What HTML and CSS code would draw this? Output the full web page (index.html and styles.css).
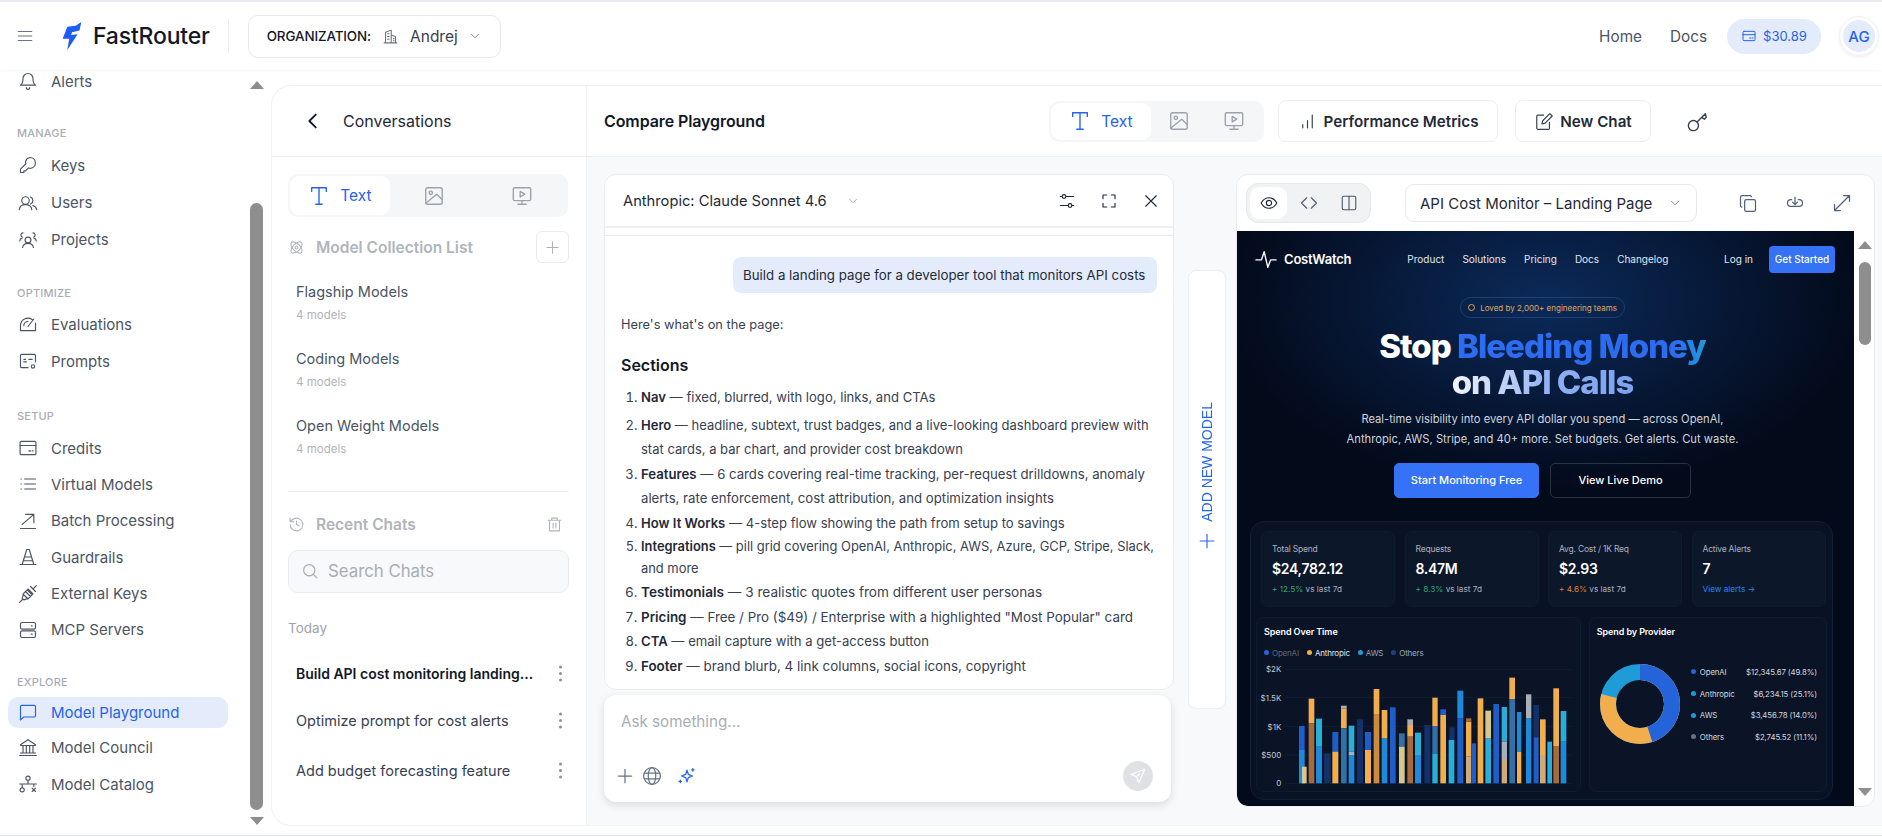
FILE: index.html
```html
<!DOCTYPE html>
<html lang="en">
<head>
    <meta charset="UTF-8">
    <title>FastRouter - Model Playground</title>
    <link rel="stylesheet" href="styles.css">
</head>
<body>
    <header class="topbar">
        <svg class="ic menu-ic" viewBox="0 0 24 24"><path d="M3 6h18M3 12h18M3 18h18"/></svg>
        <svg class="logo" viewBox="0 0 22 30"><path d="M6 5 L15 4 L21 0 L19 9 L11 11 L10 14 L17 13 L6 30 L8 18 L1 18 Z"/></svg>
        <span class="brand">FastRouter</span>
        <span class="top-divider"></span>
        <div class="org">
            <span class="org-label">ORGANIZATION:</span>
            <svg class="ic" viewBox="0 0 24 24"><path d="M3 21h18M5 21V6l8-3v18M13 10l6 2v9M8 8h2M8 12h2M8 16h2M16 15h1M16 18h1"/></svg>
            <span class="org-name">Andrej</span>
            <svg class="ic chev" viewBox="0 0 24 24"><path d="M6 9l6 6 6-6"/></svg>
        </div>
        <nav class="top-links">
            <a>Home</a>
            <a>Docs</a>
            <span class="credit">
                <svg class="ic" viewBox="0 0 24 24"><rect x="3" y="5" width="18" height="14" rx="1.5"/><path d="M3 10h18M13 15h2M17 15h1"/></svg>
                $30.89
            </span>
            <span class="avatar"><span>AG</span></span>
        </nav>
    </header>

    <div class="app">
        <aside class="sidebar">
            <ul class="side-list first">
                <li><svg class="ic" viewBox="0 0 24 24"><path d="M6 9a6 6 0 0 1 12 0c0 6 3 8 3 8H3s3-2 3-8M10 20a2 2 0 0 0 4 0"/></svg>Alerts</li>
            </ul>
            <div class="side-label">MANAGE</div>
            <ul class="side-list wide">
                <li><svg class="ic" viewBox="0 0 24 24"><path d="M14.5 3a6.5 6.5 0 0 1 1 12.9c-1 .2-2 0-3-.4L9 19H7v2H3v-4l6.500-6.500c-.4-1-.6-2-.4-3A6.500 6.500 0 0 1 14.500 3z"/></svg>Keys</li>
                <li><svg class="ic" viewBox="0 0 24 24"><circle cx="9" cy="9" r="4.500"/><path d="M1.500 20c.5-4 3.500-6 7.500-6s7 2 7.500 6M15 4.800a4.500 4.500 0 0 1 0 8.400M18 15c2.500.8 4 2.500 4.500 5"/></svg>Users</li>
                <li><svg class="ic" viewBox="0 0 24 24"><circle cx="12" cy="12" r="3.500"/><path d="M5.500 21c.4-3 3-5 6.500-5s6.100 2 6.500 5M6 3.500a2.500 2.500 0 0 0-1 4.800M2 13c.3-2 1.500-3 3-3.300M18 3.500a2.500 2.500 0 0 1 1 4.800M22 13c-.3-2-1.500-3-3-3.300"/></svg>Projects</li>
            </ul>
            <div class="side-label optimize">OPTIMIZE</div>
            <ul class="side-list wide">
                <li><svg class="ic" viewBox="0 0 24 24"><path d="M3 20v-6a9 9 0 0 1 14-7.500M21 11v9H3M12 15l7-9M7 14a5 5 0 0 1 5-5"/></svg>Evaluations</li>
                <li><svg class="ic" viewBox="0 0 24 24"><path d="M12 20H4.500A1.500 1.500 0 0 1 3 18.500v-13A1.500 1.500 0 0 1 4.500 4h15A1.500 1.500 0 0 1 21 5.500V13M7 13h3M13 10h4M7 10h2"/><circle cx="18" cy="18.500" r="2"/></svg>Prompts</li>
            </ul>
            <div class="side-label setup">SETUP</div>
            <ul class="side-list">
                <li><svg class="ic" viewBox="0 0 24 24"><rect x="2.500" y="4" width="19" height="16" rx="1.500"/><path d="M2.500 9h19M13 15.500h2M17 15.500h1"/></svg>Credits</li>
                <li><svg class="ic" viewBox="0 0 24 24"><path d="M8 6h13M8 12h13M8 18h13M3.500 6h.5M3.500 12h.5M3.500 18h.5"/></svg>Virtual Models</li>
                <li><svg class="ic" viewBox="0 0 24 24"><path d="M5 16L19 4M9 4h10v10M3 21h18"/></svg>Batch Processing</li>
                <li><svg class="ic" viewBox="0 0 24 24"><path d="M2.500 21h19M5 21L10.500 3h3L19 21M8 12h8M6.500 16.500h11"/></svg>Guardrails</li>
                <li><svg class="ic" viewBox="0 0 24 24"><path d="M2 22l4-4M18 6l4-4M6 12l6 6M9 9l6 6M12 6l6 6M5 17l2-6 4-4 6 6-4 4-6 2zM15 3l6 6"/></svg>External Keys</li>
                <li><svg class="ic" viewBox="0 0 24 24"><rect x="3" y="3" width="18" height="8" rx="2"/><rect x="3" y="13" width="18" height="8" rx="2"/><path d="M16 7h1M16 17h1"/></svg>MCP Servers</li>
            </ul>
            <div class="side-label explore">EXPLORE</div>
            <ul class="side-list">
                <li class="active"><svg class="ic" viewBox="0 0 24 24"><path d="M3 5.500A1.500 1.500 0 0 1 4.500 4h15A1.500 1.500 0 0 1 21 5.500v11a1.500 1.500 0 0 1-1.500 1.500H7l-4 3.500z"/></svg>Model Playground</li>
                <li><svg class="ic" viewBox="0 0 24 24"><path d="M12 2L3 8v1h18V8zM2 21h20M3 18h18M6 9v9M10 9v9M14 9v9M18 9v9"/></svg>Model Council</li>
                <li><svg class="ic" viewBox="0 0 24 24"><circle cx="12" cy="5" r="2.500"/><circle cx="5" cy="19" r="2.500"/><path d="M12 7.500V12M2 12h20M5 12v4.500M19 12v3M17 17l4 4M21 17l-4 4"/></svg>Model Catalog</li>
            </ul>
        </aside>
        <div class="side-scroll">
            <span class="arrow-up"></span>
            <span class="thumb"></span>
            <span class="arrow-down"></span>
        </div>

        <main class="panel">
            <section class="conversations">
                <div class="conv-head">
                    <svg class="ic back" viewBox="0 0 24 24"><path d="M15 5l-7 7 7 7"/></svg>
                    <span>Conversations</span>
                </div>
                <div class="conv-body">
                    <div class="tabs tabs-wide">
                        <span class="tab active"><svg class="ic" viewBox="0 0 24 24"><path d="M4 7V3h16v4M12 3v18M8.500 21h7"/></svg>Text</span>
                        <span class="tab"><svg class="ic" viewBox="0 0 24 24"><rect x="3" y="3" width="18" height="18" rx="2"/><circle cx="8.500" cy="8.500" r="1.800"/><path d="M3 20l12-10 6 6"/></svg></span>
                        <span class="tab"><svg class="ic" viewBox="0 0 24 24"><rect x="2.500" y="3" width="19" height="14" rx="1.500"/><path d="M10 7l5 3-5 3zM12 17v4M7.500 21h9"/></svg></span>
                    </div>
                    <div class="list-head">
                        <svg class="ic" viewBox="0 0 24 24"><circle cx="12" cy="12" r="2"/><ellipse cx="12" cy="12" rx="10" ry="5" transform="rotate(45 12 12)"/><ellipse cx="12" cy="12" rx="10" ry="5" transform="rotate(-45 12 12)"/></svg>
                        <span>Model Collection List</span>
                        <span class="add-box"><svg class="ic" viewBox="0 0 24 24"><path d="M12 4v16M4 12h16"/></svg></span>
                    </div>
                    <div class="collection"><strong>Flagship Models</strong><small>4 models</small></div>
                    <div class="collection"><strong>Coding Models</strong><small>4 models</small></div>
                    <div class="collection"><strong>Open Weight Models</strong><small>4 models</small></div>
                    <hr class="rule">
                    <div class="list-head recent">
                        <svg class="ic" viewBox="0 0 24 24"><path d="M3 12a9 9 0 1 0 3-6.700L3 8M3 3v5h5M12 7v5l4 2"/></svg>
                        <span>Recent Chats</span>
                        <svg class="ic trash" viewBox="0 0 24 24"><path d="M3 6h18M8 6V3h8v3M5 6v15h14V6M10 10v7M14 10v7"/></svg>
                    </div>
                    <div class="search">
                        <svg class="ic" viewBox="0 0 24 24"><circle cx="11" cy="11" r="7.500"/><path d="M21 21l-4.500-4.500"/></svg>
                        Search Chats
                    </div>
                    <div class="today">Today</div>
                    <div class="chat-row bold"><span>Build API cost monitoring landing...</span><i class="dots"></i></div>
                    <div class="chat-row"><span>Optimize prompt for cost alerts</span><i class="dots"></i></div>
                    <div class="chat-row"><span>Add budget forecasting feature</span><i class="dots"></i></div>
                </div>
            </section>

            <section class="playground">
                <div class="play-head">
                    <h1>Compare Playground</h1>
                    <div class="tabs">
                        <span class="tab active"><svg class="ic" viewBox="0 0 24 24"><path d="M4 7V3h16v4M12 3v18M8.500 21h7"/></svg>Text</span>
                        <span class="tab"><svg class="ic" viewBox="0 0 24 24"><rect x="3" y="3" width="18" height="18" rx="2"/><circle cx="8.500" cy="8.500" r="1.800"/><path d="M3 20l12-10 6 6"/></svg></span>
                        <span class="tab"><svg class="ic" viewBox="0 0 24 24"><rect x="2.500" y="3" width="19" height="14" rx="1.500"/><path d="M10 7l5 3-5 3zM12 17v4M7.500 21h9"/></svg></span>
                    </div>
                    <button class="head-btn perf"><svg class="ic" viewBox="0 0 24 24"><path d="M6 20v-4M12 20V11M18 20V4"/></svg>Performance Metrics</button>
                    <button class="head-btn chat"><svg class="ic" viewBox="0 0 24 24"><path d="M12 4H5a1.500 1.500 0 0 0-1.500 1.500v15A1.500 1.500 0 0 0 5 22h13a1.500 1.500 0 0 0 1.500-1.500V13M10 15l1-4 9-9 3 3-9 9z"/></svg>New Chat</button>
                    <svg class="ic key-ic" viewBox="0 0 24 24"><circle cx="7" cy="17" r="5.500"/><path d="M11 13L20 4M16 8l3 2 2-2-1-4"/></svg>
                </div>

                <div class="compare">
                    <div class="chat-col">
                        <div class="model-card">
                            <div class="model-head">
                                <span class="model-name">Anthropic: Claude Sonnet 4.6</span>
                                <svg class="ic chev" viewBox="0 0 24 24"><path d="M6 9l6 6 6-6"/></svg>
                                <span class="model-actions">
                                    <svg class="ic" viewBox="0 0 24 24"><circle cx="8" cy="6" r="2.500"/><circle cx="16" cy="18" r="2.500"/><path d="M11 6h10M3 18h10M3 6h2M19 18h2"/></svg>
                                    <svg class="ic" viewBox="0 0 24 24"><path d="M4 9V4h5M15 4h5v5M20 15v5h-5M9 20H4v-5"/></svg>
                                    <svg class="ic" viewBox="0 0 24 24"><path d="M5 5l14 14M19 5L5 19"/></svg>
                                </span>
                            </div>
                            <div class="model-strip"></div>
                            <div class="messages">
                                <div class="bubble">Build a landing page for a developer tool that monitors API costs</div>
                                <p class="intro">Here's what's on the page:</p>
                                <h2>Sections</h2>
                                <ol>
                                    <li><b>Nav</b> — fixed, blurred, with logo, links, and CTAs</li>
                                    <li class="fs-13"><b>Hero</b> — headline, subtext, trust badges, and a live-looking dashboard preview with<br>stat cards, a bar chart, and provider cost breakdown</li>
                                    <li class="fs-13-2"><b>Features</b> — 6 cards covering real-time tracking, per-request drilldowns, anomaly<br>alerts, rate enforcement, cost attribution, and optimization insights</li>
                                    <li><b>How It Works</b> — 4-step flow showing the path from setup to savings</li>
                                    <li class="integrations"><b>Integrations</b> — pill grid covering OpenAI, Anthropic, AWS, Azure, GCP, Stripe, Slack,<br>and more</li>
                                    <li class="fs-13-6"><b>Testimonials</b> — 3 realistic quotes from different user personas</li>
                                    <li class="fs-13-4"><b>Pricing</b> — Free / Pro ($49) / Enterprise with a highlighted "Most Popular" card</li>
                                    <li><b>CTA</b> — email capture with a get-access button</li>
                                    <li class="fs-13-4"><b>Footer</b> — brand blurb, 4 link columns, social icons, copyright</li>
                                </ol>
                            </div>
                        </div>
                        <div class="ask">
                            <div class="ask-text">Ask something...</div>
                            <div class="ask-tools">
                                <svg class="ic" viewBox="0 0 24 24"><path d="M12 4v16M4 12h16"/></svg>
                                <svg class="ic" viewBox="0 0 24 24"><circle cx="12" cy="12" r="10"/><ellipse cx="12" cy="12" rx="4.500" ry="10"/><path d="M3 8.500h18M3 15.500h18"/></svg>
                                <svg class="ic spark" viewBox="0 0 24 24"><path d="M12 5l1.500 5 5 2-5 2-1.500 5-1.500-5-5-2 5-2zM19 3v3M17.500 4.500h3M4 17v3M2.500 18.500h3"/></svg>
                                <span class="send"><svg class="ic" viewBox="0 0 24 24"><path d="M21 3L3 10l7 3 3 8zM10 13l4-4"/></svg></span>
                            </div>
                        </div>
                    </div>

                    <div class="add-model">
                        <span>ADD NEW MODEL</span>
                        <svg class="ic" viewBox="0 0 24 24"><path d="M12 3v18M3 12h18"/></svg>
                    </div>

                    <div class="preview-card">
                        <div class="preview-bar">
                            <div class="views">
                                <span class="view active"><svg class="ic" viewBox="0 0 24 24"><path d="M1.500 12S5.500 5 12 5s10.500 7 10.500 7-4 7-10.500 7S1.500 12 1.500 12z"/><circle cx="12" cy="12" r="3.500"/></svg></span>
                                <span class="view"><svg class="ic" viewBox="0 0 24 24"><path d="M9 5l-7 7 7 7M15 5l7 7-7 7"/></svg></span>
                                <span class="view"><svg class="ic" viewBox="0 0 24 24"><rect x="3" y="3" width="18" height="18" rx="2"/><path d="M12 3v18"/></svg></span>
                            </div>
                            <div class="page-select">
                                <span>API Cost Monitor – Landing Page</span>
                                <svg class="ic chev" viewBox="0 0 24 24"><path d="M6 9l6 6 6-6"/></svg>
                            </div>
                            <div class="bar-actions">
                                <svg class="ic" viewBox="0 0 24 24"><rect x="8" y="8" width="13" height="14" rx="2"/><path d="M16 4.500A2 2 0 0 0 14 3H5a2 2 0 0 0-2 2v10a2 2 0 0 0 1.500 2"/></svg>
                                <svg class="ic" viewBox="0 0 24 24"><path d="M8 8H7a4 4 0 0 0 0 8h10a4 4 0 0 0 0-8h-1M12 5v9M9 11l3 3 3-3"/></svg>
                                <svg class="ic" viewBox="0 0 24 24"><path d="M14 3h7v7M21 3L3 21M3 14v7h7"/></svg>
                            </div>
                        </div>
                        <div class="preview-wrap">
                            <div class="site">
                                <div class="site-nav">
                                    <svg class="ic pulse" viewBox="0 0 24 24"><path d="M1 13h6l3-9 4 17 3-8h6"/></svg>
                                    <span class="site-brand">CostWatch</span>
                                    <span class="site-links"><a>Product</a><a>Solutions</a><a>Pricing</a><a>Docs</a><a>Changelog</a></span>
                                    <span class="site-login">Log in</span>
                                    <span class="site-cta">Get Started</span>
                                </div>
                                <div class="hero">
                                    <span class="hero-badge"><i></i>Loved by 2,000+ engineering teams</span>
                                    <div class="hero-title">Stop <em>Bleeding Money</em><br><span>on API Calls</span></div>
                                    <p>Real-time visibility into every API dollar you spend — across OpenAI,<br>Anthropic, AWS, Stripe, and 40+ more. Set budgets. Get alerts. Cut waste.</p>
                                    <div class="hero-btns">
                                        <span class="btn-main">Start Monitoring Free</span>
                                        <span class="btn-ghost">View Live Demo</span>
                                    </div>
                                </div>
                                <div class="dash">
                                    <div class="stats">
                                        <div class="stat"><label>Total Spend</label><strong>$24,782.12</strong><small><em class="up">+ 12.5%</em> vs last 7d</small></div>
                                        <div class="stat"><label>Requests</label><strong>8.47M</strong><small><em class="up">+ 8.3%</em> vs last 7d</small></div>
                                        <div class="stat"><label>Avg. Cost / 1K Req</label><strong>$2.93</strong><small><em class="warn">+ 4.6%</em> vs last 7d</small></div>
                                        <div class="stat"><label>Active Alerts</label><strong>7</strong><small class="link">View alerts →</small></div>
                                    </div>
                                    <div class="charts">
                                        <div class="chart-card spend">
                                            <h3>Spend Over Time</h3>
                                            <div class="legend">
                                                <span class="muted"><i class="c-blue"></i>OpenAI</span>
                                                <span class="bright"><i class="c-orange"></i>Anthropic</span>
                                                <span><i class="c-aws"></i>AWS</span>
                                                <span><i class="c-other"></i>Others</span>
                                            </div>
                                            <svg class="bars" viewBox="15 66 960 384">
                                                <g class="grid"><path d="M100 88H960M100 173H960M100 260H960M100 345H960M100 430H960"/></g>
                                                <g class="axis"><text x="88" y="97">$2K</text><text x="88" y="182">$1.5K</text><text x="88" y="269">$1K</text><text x="88" y="354">$500</text><text x="88" y="439">0</text></g>
                                                <g fill="#12306a"><rect x="216" y="340" width="20" height="90"/><rect x="315" y="238" width="18" height="192"/><rect x="517" y="255" width="18" height="175"/><rect x="844" y="195" width="17" height="97"/><rect x="592" y="262" width="16" height="38"/></g>
                                                <g fill="#1f5dc8"><rect x="141" y="258" width="17" height="72"/><rect x="241" y="276" width="18" height="59"/><rect x="339" y="276" width="18" height="54"/><rect x="565" y="208" width="17" height="17"/><rect x="724" y="192" width="17" height="238"/><rect x="845" y="292" width="15" height="138"/><rect x="616" y="235" width="18" height="195"/><rect x="414" y="202" width="17" height="228"/><rect x="660" y="310" width="12" height="120"/></g>
                                                <g fill="#1f88d8"><rect x="141" y="330" width="17" height="100"/><rect x="192" y="320" width="18" height="110"/><rect x="290" y="345" width="17" height="85"/><rect x="389" y="295" width="17" height="135"/><rect x="489" y="345" width="18" height="85"/><rect x="616" y="152" width="18" height="83"/><rect x="926" y="305" width="17" height="125"/><rect x="795" y="216" width="13" height="119"/><rect x="822" y="235" width="16" height="195"/></g>
                                                <g fill="#28aed8"><rect x="192" y="236" width="18" height="84"/><rect x="290" y="257" width="17" height="78"/><rect x="489" y="278" width="18" height="67"/><rect x="541" y="340" width="16" height="90"/><rect x="590" y="300" width="17" height="130"/><rect x="700" y="295" width="17" height="135"/><rect x="749" y="201" width="16" height="104"/><rect x="886" y="305" width="14" height="125"/><rect x="926" y="213" width="17" height="92"/></g>
                                                <g fill="#f2ae4c"><rect x="170" y="176" width="17" height="74"/><rect x="241" y="335" width="18" height="95"/><rect x="267" y="205" width="17" height="60"/><rect x="339" y="330" width="18" height="100"/><rect x="365" y="147" width="17" height="75"/><rect x="389" y="210" width="17" height="85"/><rect x="466" y="255" width="17" height="35"/><rect x="541" y="173" width="16" height="85"/><rect x="565" y="225" width="17" height="205"/><rect x="642" y="245" width="16" height="105"/><rect x="677" y="175" width="17" height="255"/><rect x="772" y="113" width="17" height="65"/><rect x="795" y="335" width="13" height="95"/><rect x="864" y="238" width="17" height="107"/><rect x="904" y="145" width="17" height="173"/></g>
                                                <g fill="#a86a3a"><rect x="170" y="250" width="17" height="180"/><rect x="466" y="290" width="17" height="140"/><rect x="642" y="235" width="16" height="10"/><rect x="904" y="318" width="17" height="112"/></g>
                                                <g fill="#cc8a3e"><rect x="365" y="222" width="17" height="208"/></g>
                                                <g fill="#3270a8"><rect x="267" y="265" width="17" height="165"/><rect x="441" y="280" width="17" height="40"/><rect x="541" y="258" width="16" height="82"/><rect x="772" y="178" width="17" height="252"/></g>
                                                <g fill="#d6c88c"><rect x="150" y="380" width="14" height="50"/><rect x="441" y="320" width="17" height="110"/><rect x="700" y="212" width="17" height="83"/></g>
                                                <g fill="#d2aa78"><rect x="642" y="350" width="16" height="80"/><rect x="749" y="360" width="16" height="70"/><rect x="864" y="345" width="17" height="85"/></g>
                                                <g fill="#a9afb8"><rect x="267" y="197" width="17" height="8"/><rect x="466" y="238" width="17" height="17"/><rect x="749" y="305" width="16" height="55"/><rect x="822" y="163" width="16" height="72"/><rect x="290" y="335" width="17" height="10"/></g>
                                            </svg>
                                        </div>
                                        <div class="chart-card provider">
                                            <h3>Spend by Provider</h3>
                                            <div class="provider-body">
                                                <svg class="donut" viewBox="0 0 84 84">
                                                    <circle class="seg" pathLength="100" cx="42" cy="42" r="32" stroke="#1f9bd8" stroke-dasharray="100 100"/>
                                                    <circle class="seg" pathLength="100" cx="42" cy="42" r="32" stroke="#f2ae4c" stroke-dasharray="79 100"/>
                                                    <circle class="seg" pathLength="100" cx="42" cy="42" r="32" stroke="#2563d8" stroke-dasharray="45 100"/>
                                                </svg>
                                                <ul class="provider-list">
                                                    <li><i class="c-blue"></i>OpenAI<span>$12,345.67 (49.8%)</span></li>
                                                    <li><i class="c-aws"></i>Anthropic<span>$6,234.15 (25.1%)</span></li>
                                                    <li><i class="c-aws"></i>AWS<span>$3,456.78 (14.0%)</span></li>
                                                    <li><i class="c-grey"></i>Others<span>$2,745.52 (11.1%)</span></li>
                                                </ul>
                                            </div>
                                        </div>
                                    </div>
                                </div>
                            </div>
                            <div class="preview-scroll">
                                <span class="arrow-up"></span>
                                <span class="thumb"></span>
                                <span class="arrow-down"></span>
                            </div>
                        </div>
                    </div>
                </div>
            </section>
        </main>
    </div>
</body>
</html>
```

FILE: styles.css
```css
* {
    box-sizing: border-box;
}
html, body {
    margin: 0;
    height: 100%;
    overflow: hidden;
}
body {
    font-family: Inter, "Liberation Sans", sans-serif;
    background-color: #fff;
    color: #1f2937;
    border-top: 2px solid #e9e9f2;
    display: flex;
    flex-direction: column;
}
ul, ol {
    list-style: none;
    margin: 0;
    padding: 0;
}
.ic {
    width: 20px;
    height: 20px;
    fill: none;
    stroke: currentColor;
    stroke-width: 1.5;
    stroke-linecap: round;
    stroke-linejoin: round;
    flex: none;
}

/* top bar */
.topbar {
    height: 68px;
    flex: none;
    display: flex;
    align-items: center;
    padding: 0 3px 0 16px;
    position: relative;
    z-index: 2;
    background-color: #fff;
    box-shadow: 0 1px 3px rgba(0, 0, 0, 0.04);
}
.menu-ic {
    width: 18px;
    height: 18px;
    color: #6b7280;
}
.logo {
    width: 24px;
    height: 28px;
    fill: #1d5cf5;
    margin-left: 26px;
}
.brand {
    font-size: 23px;
    font-weight: 500;
    color: #111827;
    margin-left: 9px;
    letter-spacing: -0.2px;
}
.top-divider {
    width: 1px;
    height: 34px;
    background-color: #eceef1;
    margin-left: 18px;
}
.org {
    width: 253px;
    height: 43px;
    margin-left: 19px;
    border: 1px solid #e6e8ec;
    border-radius: 10px;
    display: flex;
    align-items: center;
    padding-left: 18px;
}
.org-label {
    font-size: 13.4px;
    font-weight: 500;
    color: #111827;
    letter-spacing: -0.1px;
}
.org .ic {
    width: 17px;
    height: 17px;
    color: #6b7280;
    margin-left: 11px;
}
.org-name {
    font-size: 15.5px;
    margin-left: 11px;
    color: #374151;
}
.org .chev {
    width: 14px;
    height: 14px;
    margin-left: 10px;
}
.top-links {
    margin-left: auto;
    display: flex;
    align-items: center;
    font-size: 15.3px;
    color: #4b5563;
}
.top-links a {
    margin-right: 28px;
}
.credit {
    width: 94px;
    height: 35px;
    margin-left: -8px;
    border-radius: 18px;
    background-color: #e4ecfc;
    color: #2563eb;
    font-size: 13px;
    display: flex;
    align-items: center;
    justify-content: center;
    gap: 6px;
}
.credit .ic {
    width: 16px;
    height: 16px;
}
.avatar {
    width: 40px;
    height: 40px;
    margin: 0 0 0 18px;
    border: 1px solid #eef0f3;
    border-radius: 50%;
    display: flex;
    align-items: center;
    justify-content: center;
    box-shadow: 0 1px 3px rgba(0, 0, 0, 0.08);
}
.avatar span {
    width: 32px;
    height: 32px;
    border-radius: 50%;
    background-color: #e4ecfc;
    color: #2563eb;
    font-size: 15px;
    font-weight: 500;
    display: flex;
    align-items: center;
    justify-content: center;
}

/* sidebar */
.app {
    flex: 1;
    display: flex;
    min-height: 0;
    border-bottom: 1px solid #e8e9ec;
}
.sidebar {
    width: 245px;
    flex: none;
    overflow: hidden;
    padding: 0 17px 0 8px;
}
.side-list.first {
    margin-top: -7px;
}
.side-list li {
    height: 36.4px;
    display: flex;
    align-items: center;
    gap: 13px;
    padding-left: 10px;
    font-size: 15px;
    color: #4b5563;
    border-radius: 10px;
}
.side-list.wide li {
    height: 37.2px;
}
.side-list li .ic {
    width: 20px;
    height: 20px;
    stroke-width: 1.4;
}
.side-list li.active {
    height: 31px;
    margin: 2px 0;
    background-color: #e4ecfc;
    color: #2563eb;
}
.side-label {
    height: 16px;
    margin: 26px 0 5.5px 9px;
    font-size: 11px;
    font-weight: 500;
    line-height: 16px;
    color: #a8adb5;
    letter-spacing: 0.2px;
}
.side-label.optimize {
    margin-top: 27px;
    margin-bottom: 4px;
}
.side-label.setup {
    margin-top: 28px;
    margin-bottom: 6px;
}
.side-label.explore {
    margin-top: 25.5px;
    margin-bottom: 7px;
}
.side-scroll, .preview-scroll {
    flex: none;
    display: flex;
    flex-direction: column;
    align-items: center;
    position: relative;
}
.side-scroll {
    width: 23px;
    background-color: #fff;
}
.thumb {
    background-color: #8e8e8e;
    border-radius: 7px;
    width: 13px;
}
.side-scroll .thumb {
    position: absolute;
    top: 133px;
    height: 607px;
}
.arrow-up, .arrow-down {
    width: 0;
    height: 0;
    border-left: 7px solid transparent;
    border-right: 7px solid transparent;
}
.arrow-up {
    border-bottom: 8px solid #8e8e8e;
}
.arrow-down {
    border-top: 8px solid #8e8e8e;
}
.side-scroll .arrow-up {
    margin-top: 11px;
}
.side-scroll .arrow-down {
    position: absolute;
    bottom: 10px;
}

/* main panel */
.panel {
    flex: 1;
    display: flex;
    min-width: 0;
    margin: 15px 0 9px 3px;
    border: 1px solid #f0f1f3;
    border-right: none;
    border-radius: 20px 0 0 20px;
    overflow: hidden;
    background-color: #fff;
}
.conversations {
    width: 315px;
    flex: none;
    border-right: 1px solid #f0f1f3;
}
.conv-head {
    height: 71px;
    display: flex;
    align-items: center;
    padding-left: 30px;
    font-size: 16px;
    color: #1f2937;
    border-bottom: 1px solid #eff0f2;
}
.conv-head .back {
    width: 22px;
    height: 22px;
    margin-right: 19px;
    stroke-width: 2;
    color: #111827;
}
.conv-body {
    padding: 17px 17px 0 16px;
}
.tabs {
    width: 215px;
    height: 41px;
    display: flex;
    align-items: center;
    padding: 2px;
    border-radius: 10px;
    background-color: #f5f6f7;
    font-size: 15.5px;
}
.tabs-wide {
    width: 280px;
    height: 43px;
}
.tab {
    flex: 1;
    height: 100%;
    display: flex;
    align-items: center;
    justify-content: center;
    color: #9ca3af;
}
.tab .ic {
    width: 22px;
    height: 22px;
}
.tab.active {
    flex: none;
    width: 100px;
    gap: 10px;
    background-color: #fff;
    border-radius: 9px;
    color: #2563eb;
}
.list-head {
    height: 32px;
    margin-top: 14px;
    display: flex;
    align-items: center;
    gap: 11px;
    font-size: 15.5px;
    font-weight: 600;
    color: #b0b4bb;
}
.list-head .ic {
    width: 17px;
    height: 17px;
}
.add-box {
    margin-left: auto;
    width: 33px;
    height: 32px;
    border: 1px solid #e9ebee;
    border-radius: 6px;
    display: flex;
    align-items: center;
    justify-content: center;
}
.collection {
    height: 67.2px;
    padding: 19px 0 0 8px;
}
.collection strong {
    display: block;
    font-size: 14.5px;
    font-weight: 400;
    color: #4b5563;
    line-height: 20px;
}
.collection small {
    display: block;
    font-size: 11.5px;
    line-height: 16px;
    margin-top: 5px;
    color: #b0b4bb;
}
.rule {
    border: none;
    border-top: 1px solid #eceef1;
    margin: 26.4px 0 0;
}
.recent {
    margin-top: 17px;
}
.trash {
    margin: 0 6px 0 auto;
}
.search {
    height: 43px;
    margin-top: 9px;
    display: flex;
    align-items: center;
    gap: 9px;
    padding-left: 12px;
    border: 1px solid #e9ebee;
    border-radius: 10px;
    background-color: #f8f9fa;
    font-size: 16.8px;
    color: #a8adb5;
}
.search .ic {
    width: 18px;
    height: 18px;
}
.today {
    margin-top: 25px;
    font-size: 13.5px;
    line-height: 20px;
    color: #9ca3af;
}
.chat-row {
    height: 47px;
    display: flex;
    align-items: center;
    justify-content: space-between;
    padding: 0 6px 0 8px;
    font-size: 14.5px;
    color: #374151;
}
.chat-row.bold {
    margin-top: 12px;
    font-size: 14px;
    font-weight: 600;
    color: #111827;
}
.chat-row:last-child {
    margin-top: 3px;
}
.dots {
    width: 3px;
    height: 3px;
    border-radius: 50%;
    background-color: #8b9099;
    box-shadow: 0 -6.5px 0 #8b9099, 0 6.5px 0 #8b9099;
    margin-right: 1px;
}

/* playground */
.playground {
    flex: 1;
    min-width: 0;
    display: flex;
    flex-direction: column;
}
.play-head {
    height: 71px;
    flex: none;
    display: flex;
    align-items: center;
    padding-left: 17px;
    border-bottom: 1px solid #eceef1;
}
.play-head h1 {
    width: 445px;
    margin: 0;
    font-size: 16px;
    font-weight: 600;
    color: #111827;
    letter-spacing: -0.1px;
}
.head-btn {
    height: 42px;
    display: flex;
    align-items: center;
    justify-content: center;
    gap: 7px;
    border: 1px solid #eceef1;
    border-radius: 8px;
    background-color: #fff;
    font-family: inherit;
    font-size: 15.2px;
    font-weight: 600;
    color: #1f2937;
}
.head-btn .ic {
    width: 19px;
    height: 19px;
    color: #374151;
}
.perf {
    width: 220px;
    margin-left: 14px;
}
.chat {
    width: 136px;
    margin-left: 17px;
}
.key-ic {
    margin-left: 36px;
    color: #374151;
    width: 22px;
    height: 22px;
}
.compare {
    flex: 1;
    min-height: 0;
    display: flex;
    padding: 17px 7px 18px 17px;
    background-color: #f8f9fa;
}
.chat-col {
    width: 570px;
    flex: none;
    display: flex;
    flex-direction: column;
    gap: 5px;
}
.model-card {
    height: 516px;
    border: 1px solid #eaecef;
    border-radius: 12px;
    background-color: #fff;
}
.model-head {
    height: 53px;
    display: flex;
    align-items: center;
    padding: 0 13px 0 18px;
    border-bottom: 2px solid #eff0f2;
    font-size: 14.7px;
    color: #1f2937;
}
.model-head .chev {
    width: 14px;
    height: 14px;
    margin-left: 19px;
    color: #9ca3af;
}
.model-actions {
    margin-left: auto;
    display: flex;
    gap: 24px;
    color: #1f2937;
}
.model-actions .ic {
    width: 18px;
    height: 18px;
}
.model-strip {
    height: 8px;
    border-bottom: 1px solid #e6e8ec;
}
.messages {
    padding: 21px 0 0 16px;
}
.bubble {
    width: 424px;
    height: 36px;
    margin: 0 16px 0 auto;
    padding-left: 10px;
    background-color: #e4ecfc;
    border-radius: 8px;
    font-size: 13.3px;
    line-height: 36px;
    color: #1f2937;
    white-space: nowrap;
}
.intro {
    margin: 22px 0 0;
    font-size: 12.8px;
    line-height: 20px;
    color: #374151;
}
.messages h2 {
    margin: 19px 0 0;
    font-size: 16px;
    font-weight: 600;
    line-height: 22px;
    color: #111827;
}
.messages ol {
    list-style: decimal;
    margin-top: 9px;
    padding-left: 20px;
    font-size: 13.1px;
    line-height: 24.5px;
    color: #374151;
    white-space: nowrap;
}
.messages li:first-child {
    margin-bottom: 3px;
}
.messages li.fs-13 {
    font-size: 13px;
}
.messages li.fs-13-2 {
    font-size: 13.2px;
}
.messages li.fs-13-4 {
    font-size: 13.4px;
}
.messages li.fs-13-6 {
    font-size: 13.6px;
}
.messages li.integrations {
    font-size: 12.9px;
    line-height: 22px;
    margin-top: 1px;
}
.messages b {
    font-weight: 600;
    color: #1f2937;
}
.ask {
    width: 567px;
    height: 107px;
    padding: 17px 18px 0 17px;
    border-radius: 12px;
    background-color: #fff;
    box-shadow: 0 3px 8px rgba(0, 0, 0, 0.12);
}
.ask-text {
    font-size: 15.2px;
    line-height: 20px;
    color: #a8adb5;
}
.ask-tools {
    display: flex;
    align-items: center;
    gap: 7px;
    margin: 29px 0 0 -6px;
    color: #6b7280;
}
.ask-tools .ic {
    width: 20px;
    height: 20px;
}
.ask-tools .spark {
    color: #2563eb;
    margin-left: 8px;
}
.ask-tools .send .ic {
    width: 18px;
    height: 18px;
}
.send {
    margin-left: auto;
    width: 30px;
    height: 30px;
    border-radius: 50%;
    background-color: #dfe1e5;
    color: #fff;
    display: flex;
    align-items: center;
    justify-content: center;
}
.add-model {
    width: 38px;
    height: 439px;
    flex: none;
    margin: 96px 10px 0 14px;
    border: 1px solid #eceef1;
    border-radius: 8px;
    background-color: #fff;
    display: flex;
    flex-direction: column;
    align-items: center;
    justify-content: flex-end;
    gap: 10px;
    padding-bottom: 166px;
    color: #2563eb;
}
.add-model span {
    writing-mode: vertical-rl;
    transform: rotate(180deg);
    font-family: "Liberation Sans", Arial, sans-serif;
    font-size: 14px;
}
.add-model .ic {
    width: 18px;
    height: 18px;
    margin-bottom: -8px;
}
.preview-card {
    flex: 1;
    min-width: 0;
    height: 633px;
    display: flex;
    flex-direction: column;
    border: 1px solid #eaecef;
    border-radius: 12px;
    background-color: #fff;
    overflow: hidden;
}
.preview-bar {
    height: 56px;
    flex: none;
    display: flex;
    align-items: center;
    padding: 0 0 0 9px;
}
.views {
    width: 125px;
    height: 40px;
    padding: 3px;
    display: flex;
    gap: 3px;
    background-color: #f1f2f4;
    border: 1px solid #e6e8ec;
    border-radius: 12px;
    color: #4b5a70;
}
.view {
    flex: 1;
    display: flex;
    align-items: center;
    justify-content: center;
}
.view .ic {
    width: 18px;
    height: 18px;
}
.view.active {
    background-color: #fff;
    border-radius: 9px;
    color: #1f2937;
}
.page-select {
    width: 292px;
    height: 38px;
    margin-left: 34px;
    padding: 0 14px;
    display: flex;
    align-items: center;
    justify-content: space-between;
    border: 1px solid #e6e8ec;
    border-radius: 9px;
    font-size: 15px;
    color: #1f2937;
    white-space: nowrap;
}
.page-select .chev {
    width: 14px;
    height: 14px;
    color: #6b7280;
}
.bar-actions {
    display: flex;
    gap: 27px;
    margin-left: 41px;
    color: #52627a;
}
.preview-wrap {
    flex: 1;
    min-height: 0;
    display: flex;
}
.preview-scroll {
    width: 22px;
}
.preview-scroll .arrow-up {
    margin-top: 10px;
}
.preview-scroll .thumb {
    position: absolute;
    top: 31px;
    width: 12px;
    height: 83px;
}
.preview-scroll .arrow-down {
    position: absolute;
    bottom: 10px;
}

/* dark landing page preview */
.site {
    width: 617px;
    flex: none;
    padding-bottom: 7px;
    border-radius: 0 0 0 10px;
    color: #fff;
    background: radial-gradient(ellipse 320px 190px at 50% 70px, #0b2a5a, transparent), #030a1a;
}
.site-nav {
    height: 56px;
    display: flex;
    align-items: center;
    padding: 0 19px 0 18px;
    font-size: 10px;
    color: #e5e7eb;
}
.pulse {
    width: 22px;
    height: 22px;
    color: #fff;
}
.site-brand {
    margin-left: 7px;
    font-size: 13px;
    font-weight: 600;
    color: #fff;
    letter-spacing: -0.2px;
}
.site-links {
    display: flex;
    gap: 18px;
    margin-left: 56px;
}
.site-login {
    margin-left: auto;
}
.site-cta {
    width: 66px;
    height: 27px;
    margin-left: 16px;
    border-radius: 4px;
    background-color: #3572f6;
    font-size: 10px;
    font-weight: 500;
    line-height: 27px;
    text-align: center;
    color: #fff;
}
.hero {
    display: flex;
    flex-direction: column;
    align-items: center;
    margin-left: -6px;
}
.hero-badge {
    height: 21px;
    padding: 0 7px;
    margin-top: 10px;
    display: flex;
    align-items: center;
    gap: 5px;
    border: 1px solid #1d3f73;
    border-radius: 11px;
    font-size: 8px;
    color: #e0a860;
}
.hero-badge i {
    width: 7px;
    height: 7px;
    border-radius: 50%;
    border: 1.5px solid #e0a860;
}
.hero-title {
    margin-top: 10px;
    font-size: 33px;
    font-weight: 800;
    line-height: 36px;
    letter-spacing: -1px;
    text-align: center;
}
.hero-title em {
    font-style: normal;
    background-image: linear-gradient(90deg, #2c6cf0 0, #2c6cf0 88%, #1f9bd8 100%);
    -webkit-background-clip: text;
    background-clip: text;
    color: transparent;
}
.hero-title span {
    background-image: linear-gradient(90deg, #f4f6fb 0, #8fb0f2 55%, #7ba2ee 100%);
    -webkit-background-clip: text;
    background-clip: text;
    color: transparent;
}
.hero p {
    margin: 9px 0 0;
    font-size: 11.2px;
    line-height: 20px;
    text-align: center;
    color: #d0d5de;
}
.hero-btns {
    display: flex;
    gap: 11px;
    margin-top: 14px;
}
.hero-btns span {
    height: 35px;
    font-size: 11px;
    font-weight: 500;
    line-height: 33px;
    text-align: center;
    border-radius: 5px;
}
.btn-main {
    width: 145px;
    background-color: #3572f6;
    border: 1px solid #3572f6;
}
.btn-ghost {
    width: 141px;
    border: 1px solid #2a3242;
}
.dash {
    width: 583px;
    height: 279px;
    margin: 23px 0 0 13px;
    padding: 9px 5px 0;
    border: 1px solid #101f35;
    border-radius: 14px;
    background-color: #081224;
}
.stats {
    display: grid;
    grid-template-columns: repeat(4, 134px);
    gap: 9.5px;
    margin: 0 5px;
}
.stat {
    height: 76px;
    padding: 10px 10px 0;
    border: 1px solid #0e1c32;
    border-radius: 7px;
    background-color: #0c1729;
    white-space: nowrap;
}
.stat label {
    display: block;
    font-size: 8.5px;
    line-height: 14px;
    letter-spacing: -0.2px;
    color: #aab2c0;
}
.stat strong {
    display: block;
    margin-top: 2px;
    font-size: 14px;
    font-weight: 600;
    line-height: 22px;
    letter-spacing: -0.3px;
}
.stat small {
    display: block;
    margin-top: 3px;
    font-size: 8.2px;
    line-height: 13px;
    color: #aab2c0;
}
.stat em {
    font-style: normal;
}
.up {
    color: #2fa676;
}
.warn {
    color: #d9803a;
}
.stat .link {
    color: #2b86e0;
}
.charts {
    display: flex;
    gap: 8px;
    margin-top: 10px;
}
.chart-card {
    height: 175px;
    border: 1px solid #0e1c32;
    border-radius: 7px;
    background-color: #0a1426;
    position: relative;
}
.chart-card h3 {
    margin: 0;
    font-size: 9px;
    font-weight: 600;
    line-height: 14px;
    letter-spacing: -0.1px;
    padding: 7px 0 0 7px;
}
.spend {
    width: 326px;
}
.provider {
    width: 239px;
}
.legend {
    display: flex;
    gap: 8px;
    margin: 8px 0 0 7px;
    font-size: 8px;
    line-height: 12px;
    letter-spacing: -0.2px;
    color: #9aa4b5;
}
.legend i, .provider-list i {
    display: inline-block;
    width: 5px;
    height: 5px;
    margin-right: 3px;
    border-radius: 50%;
    vertical-align: 1px;
}
.legend .muted {
    color: #5d6778;
}
.legend .bright {
    color: #e5e7eb;
}
.c-blue {
    background-color: #2563d8;
}
.c-orange {
    background-color: #f2ae4c;
}
.c-aws {
    background-color: #1f9bd8;
}
.c-other {
    background-color: #1b3f86;
}
.c-grey {
    background-color: #6b7280;
}
.bars {
    display: block;
    width: 320px;
    height: 128px;
    margin-top: 3px;
}
.grid path {
    stroke: #15233a;
    stroke-width: 2;
    fill: none;
}
.axis text {
    font-size: 24px;
    fill: #c3c9d3;
    text-anchor: end;
}
.provider-body {
    display: flex;
    align-items: center;
    margin: 22px 0 0 8px;
}
.donut {
    width: 84px;
    height: 84px;
    flex: none;
    transform: rotate(-90deg);
}
.seg {
    fill: none;
    stroke-width: 16;
}
.provider-list {
    flex: 1;
    margin: 0 9px 0 9px;
    font-size: 7.8px;
    letter-spacing: -0.1px;
    color: #d3d7de;
}
.provider-list li {
    height: 21.7px;
    display: flex;
    align-items: center;
    white-space: nowrap;
}
.provider-list i {
    margin-right: 4px;
}
.provider-list span {
    margin-left: auto;
}
```
